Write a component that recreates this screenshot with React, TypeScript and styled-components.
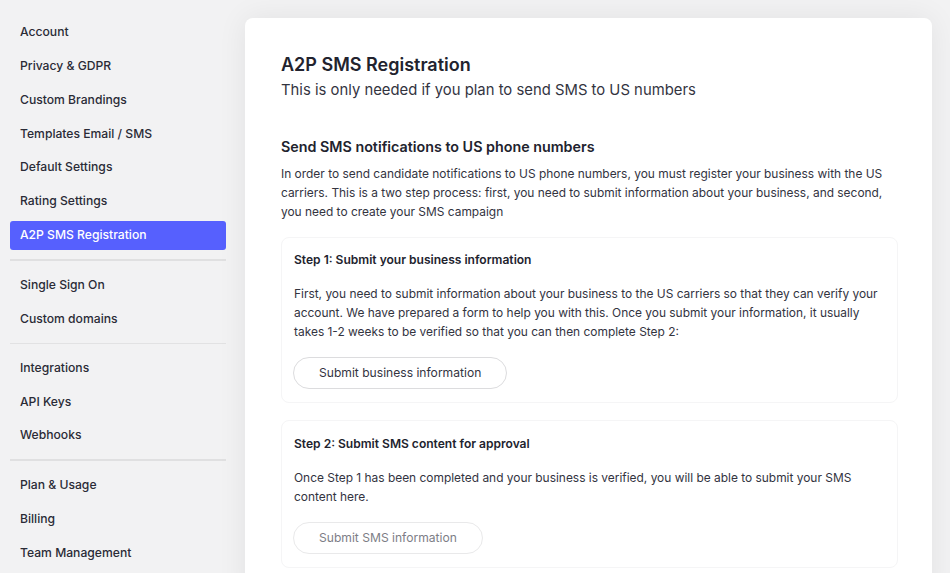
import { createGlobalStyle } from "styled-components";
import styled from "styled-components";

const GlobalStyle = createGlobalStyle`
  html, body {
    margin: 0;
    height: 100%;
    overflow: hidden;
    background: #f2f2f3;
  }
  body {
    font-family: Inter, "Liberation Sans", sans-serif;
    color: #22232e;
  }
`;

const Page = styled.div`
  display: flex;
  align-items: flex-start;
  height: 573px;
  overflow: hidden;
`;

const Sidebar = styled.nav`
  flex: none;
  width: 216px;
  margin-left: 10px;
  padding-top: 18.03px;
`;

const NavItem = styled.a<{ $active?: boolean }>`
  display: block;
  height: 29px;
  margin-bottom: 4.83px;
  padding-left: 10px;
  border-radius: 3px;
  font-size: 12.15px;
  font-weight: 500;
  line-height: 27px;
  color: ${(p) => (p.$active ? "#fff" : "#2a2b36")};
  background: ${(p) => (p.$active ? "#5660fe" : "transparent")};
`;

const Divider = styled.hr<{ $thick?: boolean }>`
  height: ${(p) => (p.$thick ? 2 : 1)}px;
  margin: 9px 0 10px;
  border: 0;
  background: ${(p) => (p.$thick ? "#e0e0e1" : "#e2e2e3")};
`;

const Card = styled.main`
  flex: none;
  box-sizing: border-box;
  width: 687px;
  margin: 18px 0 0 19px;
  padding: 36px 34px 36px 36px;
  border-radius: 8px;
  background: #fff;
  box-shadow: 0 0 30px rgba(0, 0, 0, 0.07);
`;

const Title = styled.h1`
  margin: 0;
  font-size: 18px;
  font-weight: 600;
  line-height: 22px;
  color: #22232e;
`;

const Subtitle = styled.p`
  margin: 3px 0 0;
  font-size: 14.85px;
  line-height: 22px;
  color: #33343f;
`;

const SectionTitle = styled.h2`
  margin: 35px 0 0;
  font-size: 14.3px;
  font-weight: 600;
  line-height: 22px;
  color: #22232e;
`;

const Paragraph = styled.p`
  margin: 6px 0 0;
  font-size: 11.93px;
  line-height: 19px;
  color: #33343f;
`;

const Step = styled.section`
  margin-top: 16px;
  padding: 13px 12px 13px 12px;
  border: 1px solid #f5f5f6;
  border-radius: 8px;
  & + & {
    margin-top: 17px;
    padding-top: 14px;
  }
`;

const StepTitle = styled.h3`
  margin: 0;
  font-size: 12.05px;
  font-weight: 600;
  line-height: 18px;
  color: #22232e;
`;

const StepText = styled(Paragraph)`
  margin-top: 15px;
`;

const PillButton = styled.button<{ $muted?: boolean }>`
  display: block;
  height: 32px;
  margin: 16px 0 0 -1px;
  padding: 0 25px 2px;
  border: 1px solid ${(p) => (p.$muted ? "#e9e9ea" : "#dcdcde")};
  border-radius: 16px;
  background: #fff;
  font-family: inherit;
  font-size: 12.1px;
  color: ${(p) => (p.$muted ? "#7d7e86" : "#33343f")};
`;

const groups = [
  {
    items: [
      "Account",
      "Privacy & GDPR",
      "Custom Brandings",
      "Templates Email / SMS",
      "Default Settings",
      "Rating Settings",
      "A2P SMS Registration",
    ],
    thick: true,
  },
  { items: ["Single Sign On", "Custom domains"], thick: false },
  { items: ["Integrations", "API Keys", "Webhooks"], thick: true },
  { items: ["Plan & Usage", "Billing", "Team Management"], thick: false },
];

export default function App() {
  return (
    <Page>
      <GlobalStyle />
      <Sidebar>
        {groups.map((group, i) => (
          <div key={i}>
            {group.items.map((item) => (
              <NavItem key={item} $active={item === "A2P SMS Registration"}>
                {item}
              </NavItem>
            ))}
            {i < groups.length - 1 && <Divider $thick={group.thick} />}
          </div>
        ))}
      </Sidebar>

      <Card>
        <Title>A2P SMS Registration</Title>
        <Subtitle>This is only needed if you plan to send SMS to US numbers</Subtitle>

        <SectionTitle>Send SMS notifications to US phone numbers</SectionTitle>
        <Paragraph>
          In order to send candidate notifications to US phone numbers, you must register your
          business with the US carriers. This is a two step process: first, you need to submit
          information about your business, and second, you need to create your SMS campaign
        </Paragraph>

        <Step>
          <StepTitle>Step 1: Submit your business information</StepTitle>
          <StepText>
            First, you need to submit information about your business to the US carriers so that
            they can verify your account. We have prepared a form to help you with this. Once you
            submit your information, it usually takes 1-2 weeks to be verified so that you can then
            complete Step 2:
          </StepText>
          <PillButton>Submit business information</PillButton>
        </Step>

        <Step>
          <StepTitle>Step 2: Submit SMS content for approval</StepTitle>
          <StepText>
            Once Step 1 has been completed and your business is verified, you will be able to submit
            your SMS content here.
          </StepText>
          <PillButton $muted>Submit SMS information</PillButton>
        </Step>
      </Card>
    </Page>
  );
}
